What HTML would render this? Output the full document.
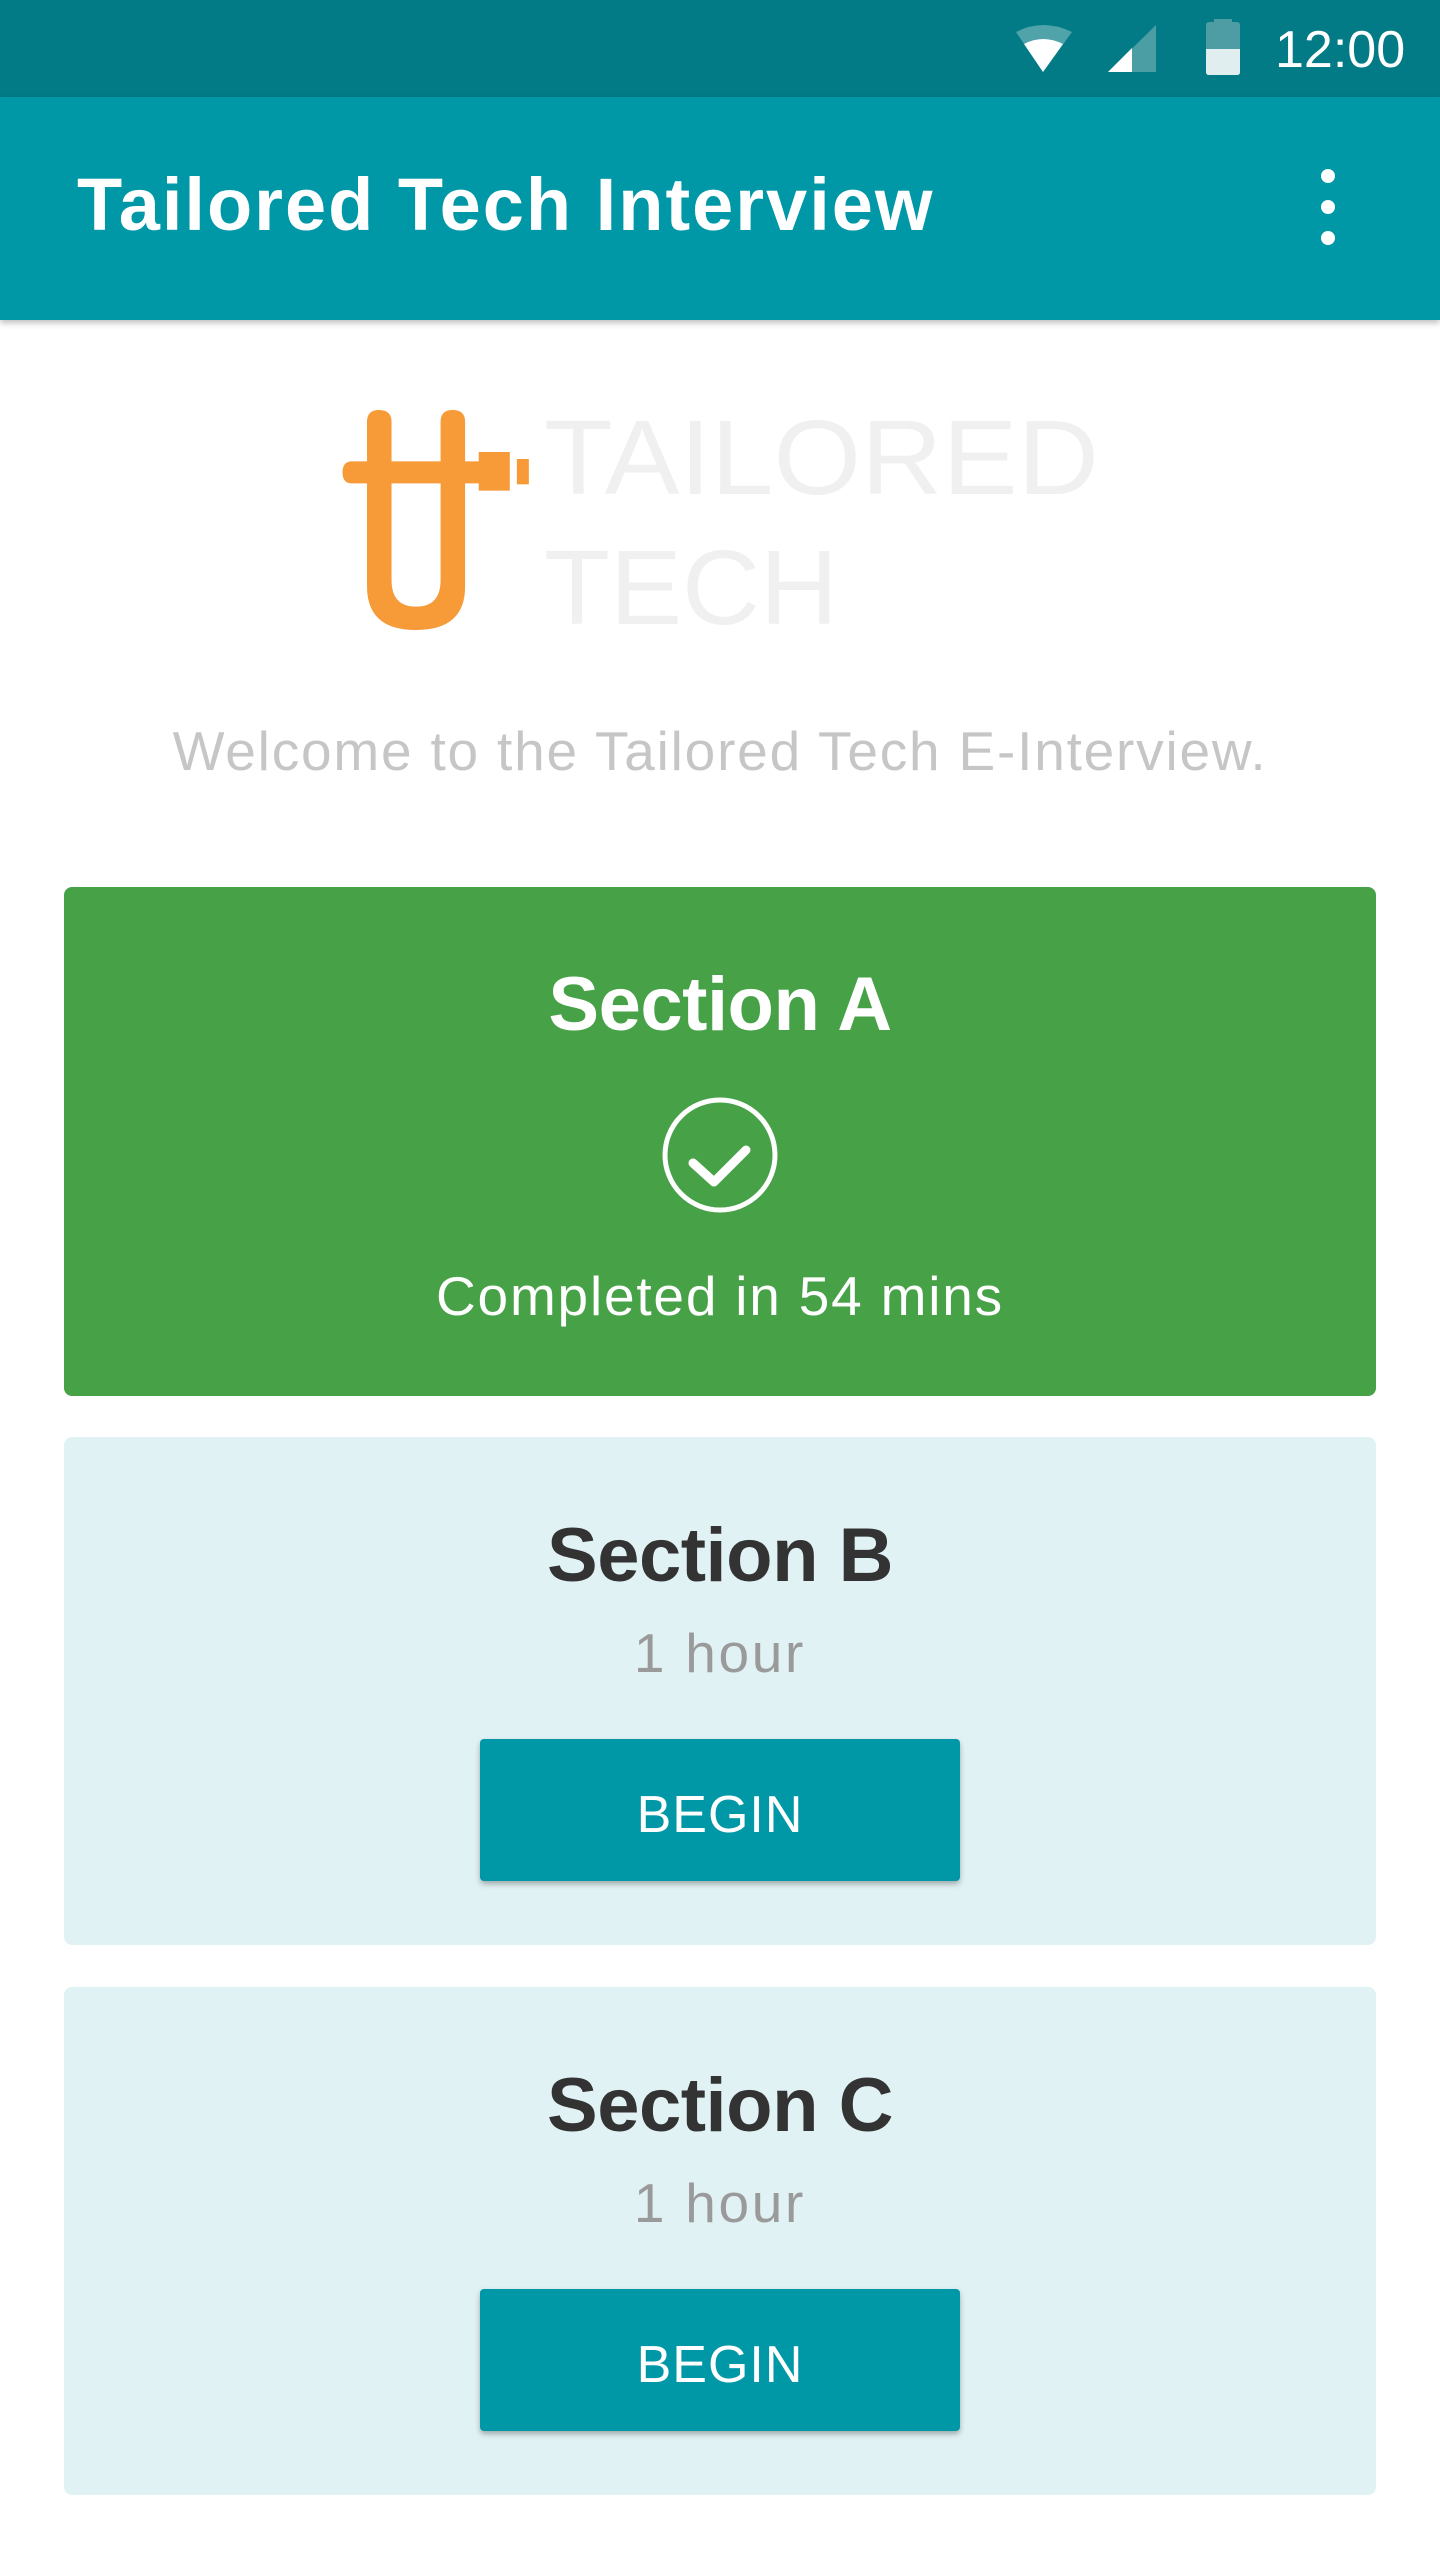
<!DOCTYPE html>
<html><head><meta charset="utf-8"><style>
*{margin:0;padding:0;box-sizing:border-box}
body{width:1440px;height:2560px;background:#fff;position:relative;overflow:hidden;font-family:"Liberation Sans",sans-serif}
.abs{position:absolute}
.c{position:absolute;left:0;width:1440px;text-align:center;white-space:nowrap}
.card{position:absolute;left:64px;width:1312px;border-radius:8px}
.btn{position:absolute;left:480px;width:480px;height:142px;background:#0097A7;border-radius:4px;box-shadow:0 3px 6px rgba(0,0,0,.3);color:#fff;font-size:52px;text-align:center;line-height:152px;letter-spacing:1px}
</style></head><body>
<div class="abs" style="left:0;top:0;width:1440px;height:97px;background:#027B86"></div>
<svg class="abs" style="left:980px;top:0" width="460" height="100">
<path d="M36,32 Q63,18 92,32 L63,72 Z" fill="#4FA3A9"/>
<path d="M44,44 Q63,34 83,44 L63,72 Z" fill="#fff"/>
<path d="M128,72 L176,25 L176,72 Z" fill="#4A9EA4"/>
<path d="M128,72 L152,48 L152,72 Z" fill="#fff"/>
<rect x="226" y="22" width="34" height="53" rx="3" fill="#4F9DA4"/>
<rect x="234" y="19" width="18" height="4" fill="#4F9DA4"/>
<path d="M226,49 H260 V72 Q260,75 257,75 H229 Q226,75 226,72 Z" fill="#E0EEEF"/>
<text x="295" y="67" font-family="Liberation Sans" font-size="52" fill="#fff">12:00</text>
</svg>
<div class="abs" style="left:0;top:97px;width:1440px;height:223px;background:#0097A7;box-shadow:0 3px 6px rgba(0,0,0,.25)"></div>
<div class="abs" style="left:77px;top:160px;font-size:74px;font-weight:bold;color:#fff;line-height:90px;white-space:nowrap;letter-spacing:2px">Tailored Tech Interview</div>
<div class="abs" style="left:1321px;top:169px;width:14px;height:14px;border-radius:50%;background:#fff"></div>
<div class="abs" style="left:1321px;top:200px;width:14px;height:14px;border-radius:50%;background:#fff"></div>
<div class="abs" style="left:1321px;top:231px;width:14px;height:14px;border-radius:50%;background:#fff"></div>
<svg class="abs" style="left:300px;top:380px" width="850" height="270" viewBox="0 0 1560 810" preserveAspectRatio="none">
<g fill="#F79A38">
<path d="M123,125 Q123,90 145,90 Q168,90 168,125 V600 Q168,680 213,680 Q258,680 258,600 V125 Q258,90 280,90 Q303,90 303,125 V620 Q303,750 213,750 Q123,750 123,620 Z"/>
<path d="M95,244 H328 V216 H385 V332 H328 V310 H95 Q78,310 78,277 Q78,244 95,244 Z"/>
<rect x="398" y="237" width="22" height="76"/>
</g>
</svg>
<svg class="abs" style="left:540px;top:400px" width="600" height="240">
<g font-family="Liberation Sans" font-size="106" fill="#F0F0F0">
<text x="4" y="94" textLength="555" lengthAdjust="spacingAndGlyphs">TAILORED</text>
<text x="4" y="224" textLength="294" lengthAdjust="spacingAndGlyphs">TECH</text>
</g>
</svg>
<div class="c" style="top:716px;font-size:55px;color:#C6C6C6;line-height:70px;letter-spacing:1.8px">Welcome to the Tailored Tech E-Interview.</div>

<div class="card" style="top:887px;height:509px;background:#46A147"></div>
<div class="c" style="top:960px;font-size:76px;font-weight:bold;color:#fff;line-height:90px;letter-spacing:-0.5px">Section A</div>
<svg class="abs" style="left:660px;top:1095px" width="120" height="120">
<circle cx="60" cy="60" r="55" fill="none" stroke="#fff" stroke-width="5"/>
<path d="M33,68 L54,87 L86,55" fill="none" stroke="#fff" stroke-width="9" stroke-linecap="round" stroke-linejoin="round"/>
</svg>
<div class="c" style="top:1261px;font-size:55px;color:#fff;line-height:70px;letter-spacing:1.8px">Completed in 54 mins</div>

<div class="card" style="top:1437px;height:508px;background:#E1F2F5"></div>
<div class="c" style="top:1511px;font-size:76px;font-weight:bold;color:#333;line-height:90px;letter-spacing:-0.5px">Section B</div>
<div class="c" style="top:1618px;font-size:55px;color:#9A9A9A;line-height:70px;letter-spacing:2.7px">1 hour</div>
<div class="btn" style="top:1739px">BEGIN</div>

<div class="card" style="top:1987px;height:508px;background:#E1F2F5"></div>
<div class="c" style="top:2061px;font-size:76px;font-weight:bold;color:#333;line-height:90px;letter-spacing:-0.5px">Section C</div>
<div class="c" style="top:2168px;font-size:55px;color:#9A9A9A;line-height:70px;letter-spacing:2.7px">1 hour</div>
<div class="btn" style="top:2289px">BEGIN</div>
</body></html>
